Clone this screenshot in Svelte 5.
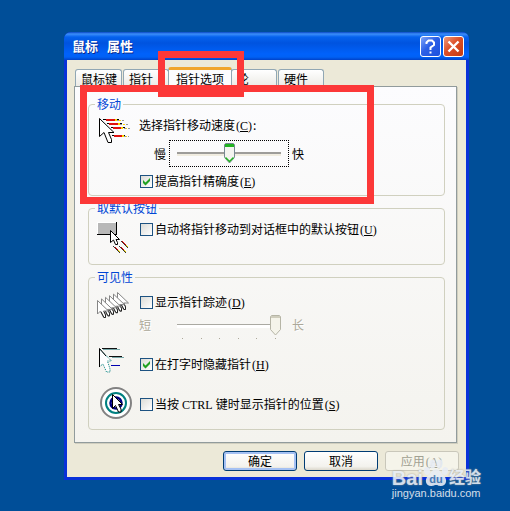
<script lang="ts">
  const tabs = ["鼠标键", "指针", "指针选项", "轮", "硬件"];

  let activeTab = $state("指针选项");
  let speed = $state(50);
  let enhance = $state(true);
  let snapTo = $state(false);
  let trails = $state(false);
  let trailLength = $state(100);
  let hideTyping = $state(true);
  let showCtrl = $state(false);
</script>

{#snippet key(letter: string)}
  <span class="key">(<u>{letter}</u>)</span>
{/snippet}

<main>
  <div class="dialog">
    <header>
      <h1><span>鼠标</span> <span>属性</span></h1>
      <button class="caption" aria-label="帮助">
        <svg viewBox="0 0 19 19" fill="none" stroke="#fff" stroke-width="2">
          <path d="M5.500 7V5.500L7.500 3.500H11L13 5.500V8L9.500 10.500V13" />
          <path d="M8.500 14.500H10.500V16.500H8.500Z" fill="#fff" stroke="none" />
        </svg>
      </button>
      <button class="caption close" aria-label="关闭">
        <svg viewBox="0 0 19 19" fill="none" stroke="#fff" stroke-width="2.400">
          <path d="M4.500 4.500L14.500 14.500M14.500 4.500L4.500 14.500" />
        </svg>
      </button>
    </header>

    <div class="body">
      <div class="tabs" role="tablist">
        {#each tabs as tab}
          <button
            role="tab"
            class:active={tab === activeTab}
            aria-selected={tab === activeTab}
            onclick={() => (activeTab = tab)}>{tab}</button
          >
        {/each}
      </div>

      <section class="panel">
        <fieldset class="motion">
          <legend>移动</legend>
          <svg class="icon" viewBox="0 0 32 32">
            <g shape-rendering="crispEdges">
              <path d="M4 1H20V2H4ZM8 5H23V6H8ZM12 9H26V10H12ZM13 17H26V18H13Z" fill="#000" />
              <path d="M7 1H16V3H7ZM10 5H19V7H10ZM14 9H22V11H14ZM15 17H23V19H15Z" fill="#e01010" />
              <path d="M16 1H18V3H16ZM20 2H22V3H20ZM19 5H21V7H19ZM24 6H26V7H24ZM22 9H24V11H22ZM27 10H28V11H27ZM23 17H25V19H23ZM27 18H28V19H27Z" fill="#ffd800" />
              <path d="M18 2H20V3H18ZM23 2H25V3H23ZM21 6H23V7H21ZM27 6H29V7H27ZM25 10H27V11H25ZM29 10H31V11H29ZM25 18H27V19H25ZM29 18H30V19H29Z" fill="#999" />
            </g>
            <path d="M0.500 0.500V18.500L5 14.500L9 24.500H12.500V21.500L9.500 14.500H15Z" fill="#fff" stroke="#000" />
          </svg>
          <div class="options">
            <label for="speed">选择指针移动速度{@render key("C")}:</label>
            <div class="slider">
              <span>慢</span>
              <div class="focus"><input id="speed" type="range" bind:value={speed} /></div>
              <span>快</span>
            </div>
            <label class="check">
              <input type="checkbox" bind:checked={enhance} />
              <span>提高指针精确度{@render key("E")}</span>
            </label>
          </div>
        </fieldset>

        <fieldset class="snap">
          <legend>取默认按钮</legend>
          <svg class="icon" viewBox="0 0 32 32">
            <path d="M0 0H20V13H0Z" fill="#000" />
            <path d="M0 0H19V12H0Z" fill="#fff" />
            <path d="M1 1H19V12H1Z" fill="#b8b8b8" />
            <path d="M16 24L23 31M22 24L29 31M24 19L31 26" stroke="#333" />
            <path d="M18 25L22 29M24 25L27 28M25 19L29 23" stroke="#e00000" />
            <path d="M21 28L23 30M27 28L29 30M29 23L31 25" stroke="#eed200" />
            <path d="M13.500 8.500V20.500L16.500 18L18.500 22.500H20.500V20.500L19 17.500H22.500Z" fill="#fff" stroke="#000" />
          </svg>
          <div class="options">
            <label class="check">
              <input type="checkbox" bind:checked={snapTo} />
              <span>自动将指针移动到对话框中的默认按钮{@render key("U")}</span>
            </label>
          </div>
        </fieldset>

        <fieldset class="visibility">
          <legend>可见性</legend>
          <svg class="icon" viewBox="0 0 32 32">
            {#each [20, 16, 12, 8, 4, 0] as x}
              <g transform="translate({x} {9 - (x / 20) * 8})">
                <path d="M0.500 0.500V14L3.500 11L6.500 17.500H8.500V14.500L6.500 11H11.500Z" fill="#fff" stroke="#858585" />
                <path d="M4 12L7 17.500H8.500V15L7 11.500" fill="none" stroke="#222" />
              </g>
            {/each}
          </svg>
          <div class="options trails">
            <label class="check">
              <input type="checkbox" bind:checked={trails} />
              <span>显示指针踪迹{@render key("D")}</span>
            </label>
            <div class="slider muted">
              <span>短</span>
              <div class="track">
                <input type="range" aria-label="踪迹长度" bind:value={trailLength} disabled={!trails} />
                <div class="ticks">
                  {#each Array(6) as _}<i></i>{/each}
                </div>
              </div>
              <span>长</span>
            </div>
          </div>

          <svg class="icon" viewBox="0 0 32 32">
            <g shape-rendering="crispEdges">
              <path d="M5 1H20V2H5ZM12 9H25V10H12Z" fill="#111" />
              <path d="M6 2H23V3H6ZM15 10H27V11H15Z" fill="#78a8a8" />
              <path d="M14 18H23V19H14Z" fill="#0000b0" />
            </g>
            <path d="M2 2L14 14H10L13 23L10 25L6 17L2 20Z" fill="#fff" />
            <path d="M2.500 2L14.500 14H10.500L13 22V25H9.500L6 17L2 20" fill="none" stroke="#008080" stroke-dasharray="1 1" />
            <path d="M2.500 20V1.500L9 9" fill="none" stroke="#000" />
          </svg>
          <div class="options typing">
            <label class="check">
              <input type="checkbox" bind:checked={hideTyping} />
              <span>在打字时隐藏指针{@render key("H")}</span>
            </label>
          </div>

          <svg class="icon target" viewBox="0 0 32 32">
            <circle cx="16" cy="16" r="15" fill="#fff" stroke="#828282" stroke-width="2" />
            <circle cx="16" cy="16" r="10" fill="#fff" stroke="#008080" stroke-width="2" />
            <circle cx="16" cy="16" r="5.500" fill="#fff" stroke="#000080" stroke-width="2.500" />
            <path d="M12.500 7.500V21.500L15.500 18.500L18.500 25H21V22L18.500 17.500H22.500Z" fill="#fff" stroke="#000" />
          </svg>
          <div class="options typing">
            <label class="check">
              <input type="checkbox" bind:checked={showCtrl} />
              <span>当按<span class="latin">&nbsp;CTRL&nbsp;</span>键时显示指针的位置{@render key("S")}</span>
            </label>
          </div>
        </fieldset>
      </section>

      <footer>
        <button class="default">确定</button>
        <button>取消</button>
        <button disabled>应用{@render key("A")}</button>
      </footer>
    </div>

    <div class="mark mark-tab"></div>
    <div class="mark mark-motion"></div>

    <div class="watermark">
      <div class="brand">
        <span class="bai">Bai</span>
        <span class="paw">
          <svg viewBox="0 0 26 28">
            <g fill="#e8edf4">
              <ellipse cx="4" cy="12" rx="3" ry="4" transform="rotate(-15 4 12)" />
              <ellipse cx="9.500" cy="5" rx="3" ry="4.500" />
              <ellipse cx="16.500" cy="5" rx="3" ry="4.500" transform="rotate(8 16.500 5)" />
              <ellipse cx="22" cy="12" rx="3" ry="4" transform="rotate(15 22 12)" />
              <path d="M13 10C9 10 8 14 5 17C1 21 3 27 8 27C11 27 11 26 13 26C15 26 15 27 18 27C23 27 25 21 21 17C18 14 17 10 13 10Z" />
            </g>
          </svg>
          <b>du</b>
        </span>
        <span class="jingyan">经验</span>
      </div>
      <div class="site">jingyan.baidu.com</div>
    </div>
  </div>
</main>

<style>
  :global(body) {
    margin: 0;
    background: #004e98;
  }

  main {
    box-sizing: border-box;
    min-height: 100vh;
    padding: 32px 41px 30px 64px;
    background: #004e98;
    color: #000;
    font: 12px/14px "Noto Sans CJK SC", sans-serif;
  }

  button {
    padding: 0;
    color: inherit;
    font: inherit;
  }

  .dialog {
    position: relative;
    border-radius: 7px 7px 0 0;
    background: #0831d9;
  }

  header {
    display: flex;
    align-items: center;
    gap: 2px;
    height: 28px;
    padding: 0 5px 0 8px;
    border-radius: 7px 7px 0 0;
    background: linear-gradient(#0a48c4, #3b8efa 2px, #0562ee 5px, #0053df 11px, #0062fb 22px, #0061f5 25px, #0042c8);
  }

  h1 {
    display: flex;
    flex: 1;
    gap: 9px;
    margin: 0;
    color: #fff;
    font-size: 13px;
    line-height: 18px;
    text-shadow: 1px 1px #0b2b8c;
  }

  .caption {
    width: 21px;
    height: 21px;
    border: 1px solid #fff;
    border-radius: 3px;
    background: linear-gradient(135deg, #7ea4f8, #2c5fe6 45%, #1b51dd);
  }

  .caption svg {
    display: block;
  }

  .close {
    background: linear-gradient(135deg, #ee9a7c, #dc4f28 45%, #c63a10);
  }

  .body {
    margin: 0 3px;
    padding: 7px 9px 6px 7px;
    border-bottom: 3px solid #0831d9;
    background: #ece9d8;
  }

  .tabs {
    display: flex;
    align-items: flex-end;
    gap: 1px;
    height: 19px;
    padding-left: 1px;
  }

  .tabs button {
    box-sizing: border-box;
    min-width: 46px;
    height: 17px;
    padding: 0 4px 0 5px;
    border: 1px solid #91a7b4;
    border-bottom: 0;
    border-radius: 3px 3px 0 0;
    background: linear-gradient(#fff, #ecebe6);
    text-align: left;
    line-height: 17px;
  }

  .tabs .active {
    z-index: 1;
    height: 20px;
    margin: 0 -2px -1px;
    padding: 0 7px;
    border-top: 3px solid #f0a52c;
    background: #fcfcfe;
    line-height: 14px;
  }

  .panel {
    display: flex;
    flex-direction: column;
    gap: 5px;
    padding: 10px 11px 12px 13px;
    border: 1px solid #919b9c;
    background: linear-gradient(#fcfcfe, #f4f3ee);
    box-shadow: 1px 1px #d0cebf;
  }

  fieldset {
    display: grid;
    grid-template-columns: 32px 1fr;
    column-gap: 10px;
    align-items: start;
    min-width: 0;
    margin: 0;
    padding: 7px 8px 10px;
    border: 1px solid #d0d0bf;
    border-radius: 4px;
  }

  legend {
    margin-left: -2px;
    padding: 0 2px;
    color: #0046d5;
  }

  .icon {
    width: 32px;
    height: 32px;
  }

  .options {
    display: flex;
    flex-direction: column;
    gap: 5px;
  }

  .motion {
    padding: 7px 8px 6px 10px;
  }

  .motion legend {
    margin-left: -4px;
  }

  .motion .options {
    gap: 7px;
    margin-left: -2px;
  }

  .visibility {
    row-gap: 8px;
  }

  .trails {
    padding-top: 4px;
  }

  .typing {
    padding-top: 10px;
  }

  .target {
    margin-left: 3px;
  }

  .key,
  .latin {
    font-family: "Liberation Serif", serif;
  }

  .key {
    padding: 0 1px;
  }

  .check {
    display: flex;
    align-items: center;
  }

  .check input {
    flex: none;
    width: 13px;
    height: 13px;
    margin: 0 2px 0 1px;
    border: 1px solid #1d5281;
    background: linear-gradient(135deg, #dcdcd7, #fff);
    appearance: none;
  }

  .check input:checked {
    background: url("data:image/svg+xml,%3Csvg xmlns='http://www.w3.org/2000/svg' viewBox='0 0 11 11'%3E%3Cpath d='M2 4v3l2.500 2.500L9 5V2L4.500 6.500Z' fill='%2321a121'/%3E%3C/svg%3E"), linear-gradient(135deg, #dcdcd7, #fff);
  }

  .slider {
    display: flex;
    align-items: center;
    gap: 3px;
    padding-left: 15px;
  }

  .focus {
    padding: 2px 7px;
    border: 1px dotted #000;
  }

  input[type="range"] {
    display: block;
    width: 104px;
    height: 21px;
    margin: 0;
    background: linear-gradient(#9d9c99, #9d9c99) center 9px / 100% 2px no-repeat, linear-gradient(#f0ece0, #f0ece0) center 11px / 100% 2px no-repeat;
    appearance: none;
  }

  input[type="range"]::-webkit-slider-thumb {
    width: 11px;
    height: 21px;
    background: url("data:image/svg+xml,%3Csvg xmlns='http://www.w3.org/2000/svg' viewBox='0 0 11 21'%3E%3Cpath d='M.5 1.500L1.500.5H9.500L10.500 1.500V14.500L5.500 20L.5 14.500Z' fill='%23f3f3ef' stroke='%23778892'/%3E%3Cpath d='M1 1H10V4H1Z' fill='%2321b321'/%3E%3Cpath d='M1.500 14.500L5.500 18.500L9.500 14.500' fill='none' stroke='%2321b321' stroke-width='1.500'/%3E%3C/svg%3E");
    appearance: none;
  }

  input[type="range"]:disabled {
    background: linear-gradient(#aaa9a2, #aaa9a2) center 9px / 100% 1px no-repeat, linear-gradient(#fff, #fff) center 10px / 100% 3px no-repeat;
  }

  input[type="range"]:disabled::-webkit-slider-thumb {
    background: url("data:image/svg+xml,%3Csvg xmlns='http://www.w3.org/2000/svg' viewBox='0 0 11 21'%3E%3Cpath d='M.5 1.500L1.500.5H9.500L10.500 1.500V14.500L5.500 20L.5 14.500Z' fill='%23f5f4ea' stroke='%23b6b5a6'/%3E%3Cpath d='M1 1H10V3H1Z' fill='%23cfcdbd'/%3E%3C/svg%3E");
  }

  .muted {
    align-items: flex-start;
    gap: 11px;
    padding-left: 0;
    color: #aca899;
    text-shadow: 1px 1px #fff;
  }

  .muted span {
    padding-top: 3px;
  }

  .track {
    width: 104px;
    margin-left: 15px;
  }

  .ticks {
    display: flex;
    justify-content: space-between;
    padding: 2px 5px 0;
  }

  .ticks i {
    width: 1px;
    height: 1px;
    background: #aca899;
  }

  footer {
    display: flex;
    justify-content: flex-end;
    gap: 7px;
    padding-top: 8px;
    margin-right: -2px;
  }

  footer button {
    width: 74px;
    height: 20px;
    border: 1px solid #003c74;
    border-radius: 3px;
    background: linear-gradient(#fff, #f3f2ed 80%, #dcd8cc);
    line-height: 16px;
  }

  footer .default {
    box-shadow: inset 0 0 0 2px #a5c1f3;
  }

  footer button:disabled {
    border-color: #c9c7ba;
    background: #f5f4ea;
    color: #a1a192;
  }

  .mark {
    position: absolute;
    z-index: 2;
    box-sizing: border-box;
    border: 7px solid #fc3838;
    pointer-events: none;
  }

  .mark-tab {
    top: 19px;
    left: 94px;
    width: 86px;
    height: 46px;
    border-bottom-width: 10px;
  }

  .mark-motion {
    top: 53px;
    left: 16px;
    width: 294px;
    height: 119px;
  }

  .watermark {
    position: absolute;
    right: -12px;
    bottom: -19px;
    z-index: 3;
    color: #e8edf4;
    opacity: 0.9;
    font-family: "Liberation Sans", "Noto Sans CJK SC", sans-serif;
    text-shadow: 0 0 2px #9a9a90;
    pointer-events: none;
  }

  .brand {
    display: flex;
    align-items: flex-end;
    height: 28px;
  }

  .bai {
    font-size: 20px;
    font-weight: bold;
    line-height: 18px;
  }

  .paw {
    display: grid;
    width: 26px;
    height: 28px;
  }

  .paw svg,
  .paw b {
    grid-area: 1 / 1;
  }

  .paw b {
    align-self: end;
    padding-bottom: 2px;
    color: #4d80b5;
    font-size: 11px;
    line-height: 12px;
    text-align: center;
    text-shadow: none;
  }

  .jingyan {
    font-size: 16px;
    font-weight: bold;
    line-height: 18px;
  }

  .site {
    font-size: 11px;
    line-height: 12px;
    text-shadow: none;
  }
</style>
